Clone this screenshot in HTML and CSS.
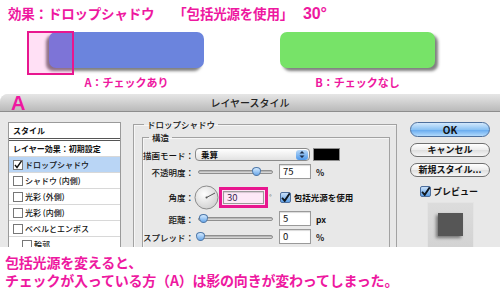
FILE: index.html
```html
<!DOCTYPE html>
<html lang="ja">
<head>
  <meta charset="UTF-8">
  <meta name="viewport" content="width=device-width, initial-scale=1.0">
  <title>包括光源を使用</title>
  <link rel="stylesheet" href="styles.css">
</head>
<body>
  <div class="demo">
    <h1 class="title">効果：ドロップシャドウ<span class="title-sub">「包括光源を使用」<span class="title-num">30°</span></span></h1>
    <div class="samples">
      <div class="sample sample-a">
        <div class="swatch swatch-blue"><span class="mark"></span></div>
        <p class="caption">A：チェックあり</p>
      </div>
      <div class="sample sample-b">
        <div class="swatch swatch-green"></div>
        <p class="caption">B：チェックなし</p>
      </div>
    </div>
  </div>

  <div class="dialog">
    <div class="titlebar">レイヤースタイル<span class="tag">A</span></div>
    <div class="dialog-body">
      <ul class="styles">
        <li class="head">スタイル</li>
        <li class="head sub">レイヤー効果：初期設定</li>
        <li class="selected"><span class="cb cb-on"></span>ドロップシャドウ</li>
        <li><span class="cb"></span>シャドウ (内側)</li>
        <li><span class="cb"></span>光彩 (外側)</li>
        <li><span class="cb"></span>光彩 (内側)</li>
        <li><span class="cb"></span>ベベルとエンボス</li>
        <li class="indent"><span class="cb"></span>輪郭</li>
      </ul>

      <fieldset class="group outer">
        <legend>ドロップシャドウ</legend>
        <fieldset class="group inner">
          <legend>構造</legend>
          <div class="row row-first">
            <span class="label">描画モード：</span>
            <div class="select"><span class="select-text">乗算</span>
              <span class="stepper">
                <svg width="8" height="9" viewBox="0 0 8 9"><path d="M4 1 L6.5 3.5 H1.5 Z M4 8 L6.5 5.5 H1.5 Z" fill="#1b2a44"/></svg>
              </span>
            </div>
            <span class="color"></span>
          </div>
          <div class="row">
            <span class="label">不透明度：</span>
            <div class="slider"><span class="thumb" style="left: 73%"></span></div>
            <span class="field">75</span>
            <span class="unit">%</span>
          </div>
          <div class="row row-angle">
            <span class="label">角度：</span>
            <svg class="dial" width="25" height="25" viewBox="0 0 25 25">
              <defs>
                <radialGradient id="dialfill" cx="40%" cy="35%" r="70%">
                  <stop offset="0" stop-color="#ffffff"/>
                  <stop offset="1" stop-color="#cfcfcf"/>
                </radialGradient>
              </defs>
              <circle cx="12.5" cy="12.5" r="11.5" fill="url(#dialfill)" stroke="#8c8c8c"/>
              <line x1="12.5" y1="12.5" x2="21" y2="8" stroke="#555" stroke-width="1"/>
              <circle cx="12.5" cy="12.5" r="1" fill="#555"/>
            </svg>
            <span class="mark-box"><span class="field field-pink">30</span></span>
            <span class="deg">°</span>
            <span class="check"></span>
            <span class="check-label">包括光源を使用</span>
          </div>
          <div class="row">
            <span class="label">距離：</span>
            <div class="slider"><span class="thumb" style="left: 2%"></span></div>
            <span class="field">5</span>
            <span class="unit">px</span>
          </div>
          <div class="row">
            <span class="label">スプレッド：</span>
            <div class="slider"><span class="thumb" style="left: -2%"></span></div>
            <span class="field">0</span>
            <span class="unit">%</span>
          </div>
        </fieldset>
      </fieldset>

      <div class="actions">
        <div class="btn btn-ok">OK</div>
        <div class="btn">キャンセル</div>
        <div class="btn">新規スタイル...</div>
        <div class="preview-check"><span class="check"></span>プレビュー</div>
        <div class="preview"><span class="preview-square"></span></div>
      </div>
    </div>
  </div>

  <p class="note">包括光源を変えると、<br>チェックが入っている方（A）は影の向きが変わってしまった。</p>
</body>
</html>
```

FILE: styles.css
```css
html, body {
  margin: 0;
  padding: 0;
  background: #fff;
  font-family: "Noto Sans CJK JP", "Noto Sans", sans-serif;
  overflow: hidden;
}
.demo {
  height: 94px;
}
.title {
  margin: 0;
  padding: 4px 0 0 8px;
  font-size: 13.5px;
  line-height: 18px;
  font-weight: 700;
  color: #ee18a0;
  letter-spacing: -0.2px;
}
.title-sub {
  margin-left: 19px;
}
.title-num {
  margin-left: 10px;
  font-family: "Liberation Sans", Arial, sans-serif;
  font-size: 16px;
}
.samples {
  display: flex;
  margin-top: 9px;
}
.sample {
  display: flex;
  flex-direction: column;
  align-items: center;
}
.sample-a {
  margin-left: 49px;
  width: 155px;
}
.sample-b {
  margin-left: 76px;
  width: 155px;
}
.swatch {
  position: relative;
  width: 100%;
  height: 36px;
  border-radius: 7px;
}
.swatch-blue {
  background: #6b84dd;
  box-shadow: -3px 3px 3px rgba(0, 0, 0, 0.5);
}
.swatch-green {
  background: #77e368;
  box-shadow: 3px 3px 3px rgba(0, 0, 0, 0.5);
}
.mark {
  position: absolute;
  left: -22px;
  top: -1px;
  width: 43px;
  height: 40px;
  border: 2px solid #e8168f;
  background: rgba(255, 0, 170, 0.12);
}
.caption {
  margin: 7px 0 0;
  font-size: 11px;
  line-height: 14px;
  font-weight: 700;
  color: #ee18a0;
}

/* dialog */
.dialog {
  position: relative;
  height: 153px;
  background: #e8e8e8;
  border-top-left-radius: 8px;
}
.titlebar {
  height: 17px;
  line-height: 17px;
  text-align: center;
  font-size: 10px;
  font-weight: 500;
  color: #222;
  background: linear-gradient(#e6e6e6, #bababa);
  border-bottom: 1px solid #8e8e8e;
  border-top-left-radius: 8px;
}
.tag {
  position: absolute;
  left: 11px;
  top: -3px;
  font-family: "Liberation Sans", Arial, sans-serif;
  font-weight: 700;
  font-size: 20px;
  line-height: 24px;
  color: #ee18a0;
}
.dialog-body {
  display: flex;
  align-items: flex-start;
  box-sizing: border-box;
  height: 135px;
  overflow: hidden;
  padding: 6px 0 0 8px;
  font-size: 8.5px;
  font-weight: 500;
  color: #111;
}

.styles {
  list-style: none;
  margin: 4px 0 0;
  padding: 0;
  width: 111px;
  height: 140px;
  background: #fff;
  border: 1px solid #9a9a9a;
  font-size: 8px;
}
.styles li {
  display: flex;
  align-items: center;
  box-sizing: border-box;
  height: 16px;
  padding-left: 4px;
  border-bottom: 1px solid #d8d8d8;
  white-space: nowrap;
}
.styles .head {
  font-weight: 700;
}
.styles li:first-child {
  height: 18px;
  border-bottom: 3px double #555;
}
.styles .selected {
  background: #b9d5f5;
}
.styles .indent {
  padding-left: 13px;
}
.cb {
  width: 8px;
  height: 8px;
  margin-right: 2px;
  border: 1px solid #777;
  background: #fff;
  flex: none;
}
.cb-on {
  background: #fff url("data:image/svg+xml,%3Csvg xmlns='http://www.w3.org/2000/svg' width='8' height='8'%3E%3Cpath d='M1 4 L3 6.5 L7.5 0' fill='none' stroke='%23111' stroke-width='1.4'/%3E%3C/svg%3E") no-repeat center;
}

.group {
  margin: 0;
  border: 1px solid #a2a2a2;
  box-shadow: inset 1px 1px 0 #f6f6f6;
}
.group legend {
  font-size: 8.5px;
  line-height: 12px;
  padding: 0 3px;
}
.outer {
  margin-left: 12px;
  width: 248px;
  height: 160px;
  padding: 1px 6px 0 8px;
}
.outer > legend {
  margin-left: 2px;
}
.inner {
  height: 150px;
  padding: 5px 0 0;
}
.inner > legend {
  margin-left: 6px;
}
.row {
  display: flex;
  align-items: center;
  height: 15px;
}
.row + .row {
  margin-top: 3px;
}
.row-first {
  height: 13px;
}
.row-angle {
  height: 20px;
}
.row + .row-angle {
  margin-top: 8px;
}
.row-angle + .row {
  margin-top: 4px;
}
.label {
  width: 51px;
  text-align: right;
  white-space: nowrap;
  flex: none;
}
.select {
  display: flex;
  align-items: center;
  box-sizing: border-box;
  width: 115px;
  height: 13px;
  margin-left: 1px;
  padding: 0 1px 0 5px;
  border: 1px solid #8a8a8a;
  border-radius: 4px;
  background: linear-gradient(#fff, #e2e2e2);
}
.select-text {
  flex: 1;
  line-height: 11px;
  font-weight: 700;
}
.stepper {
  display: flex;
  align-items: center;
  justify-content: center;
  width: 12px;
  height: 10px;
  border-radius: 3px;
  background: linear-gradient(#b7d8f8, #4e98ea);
}
.color {
  width: 25px;
  height: 11px;
  margin-left: 3px;
  background: #000;
  border: 1px solid #8c8c8c;
}
.slider {
  position: relative;
  width: 75px;
  height: 15px;
  margin-left: 4px;
}
.slider::before {
  content: "";
  position: absolute;
  left: 0;
  right: 0;
  top: 6px;
  height: 2px;
  border: 1px solid #8f8f8f;
  border-radius: 2px;
  background: linear-gradient(#a8a8a8, #e4e4e4);
}
.thumb {
  position: absolute;
  top: 3px;
  width: 7px;
  height: 7px;
  margin-left: -1px;
  border: 1px solid #4d78aa;
  border-radius: 50% 50% 50% 50% / 40% 40% 60% 60%;
  background: linear-gradient(#d6ebff, #6aa8ea);
}
.field {
  box-sizing: border-box;
  width: 32px;
  height: 15px;
  margin-left: 6px;
  padding-left: 3px;
  line-height: 13px;
  font-size: 9.5px;
  font-weight: 400;
  border: 1px solid #9a9a9a;
  background: #fff;
  box-shadow: inset 0 1px 1px rgba(0, 0, 0, 0.15);
}
.unit {
  margin-left: 5px;
  font-weight: 700;
}
.dial {
  flex: none;
}
.mark-box {
  box-sizing: border-box;
  width: 49px;
  height: 21px;
  padding: 1px;
  border: 3px solid #e8168f;
  background: #fbe3f3;
}
.field-pink {
  display: block;
  width: 41px;
  height: 13px;
  margin: 0;
  background: #fde9f7;
  color: #3a2a55;
  line-height: 11px;
}
.deg {
  margin-left: 1px;
  font-size: 7px;
  color: #777;
}
.check {
  display: inline-block;
  box-sizing: border-box;
  width: 11px;
  height: 11px;
  margin-left: 8px;
  border: 1px solid #4d6e9c;
  border-radius: 2px;
  background: url("data:image/svg+xml,%3Csvg xmlns='http://www.w3.org/2000/svg' width='10' height='10'%3E%3Cpath d='M1.5 5 L4 8 L9 0.5' fill='none' stroke='%23101820' stroke-width='1.8'/%3E%3C/svg%3E") no-repeat center, linear-gradient(#c8e0fa, #5d9fe6);
}
.check-label {
  margin-left: 3px;
  white-space: nowrap;
  font-weight: 700;
}

.actions {
  display: flex;
  flex-direction: column;
  align-items: center;
  width: 80px;
  margin: 4px 0 0 13px;
  font-size: 9px;
}
.btn {
  box-sizing: border-box;
  width: 80px;
  height: 14px;
  line-height: 12px;
  text-align: center;
  font-weight: 700;
  border: 1px solid #6f6f6f;
  border-radius: 8px;
  background: linear-gradient(#fff, #ececec 50%, #dedede 51%, #f6f6f6);
}
.btn + .btn {
  margin-top: 6px;
}
.btn-ok {
  height: 15px;
  line-height: 13px;
  font-size: 10px;
  border-color: #4c6f9d;
  background: linear-gradient(#d2e8fc, #8cc3f4 50%, #62a7ee 51%, #b2dafc);
}
.preview-check {
  display: flex;
  align-items: center;
  margin-top: 8px;
  margin-left: -2px;
  height: 12px;
  font-weight: 700;
}
.preview-check .check {
  margin: 0 2px 0 0;
}
.preview {
  box-sizing: border-box;
  width: 47px;
  height: 60px;
  margin-top: 5px;
  padding: 10px 0 0 10px;
  background: linear-gradient(#dcdcdc, #d0d0d0);
  border: 1px solid #e4e4e4;
}
.preview-square {
  display: block;
  width: 25px;
  height: 23px;
  background: #565656;
  box-shadow: -2px 2px 3px rgba(0, 0, 0, 0.45);
}

.note {
  margin: 0;
  padding: 6px 0 0 5px;
  font-size: 14px;
  line-height: 18px;
  font-weight: 700;
  color: #ee18a0;
  letter-spacing: -0.2px;
}
```
